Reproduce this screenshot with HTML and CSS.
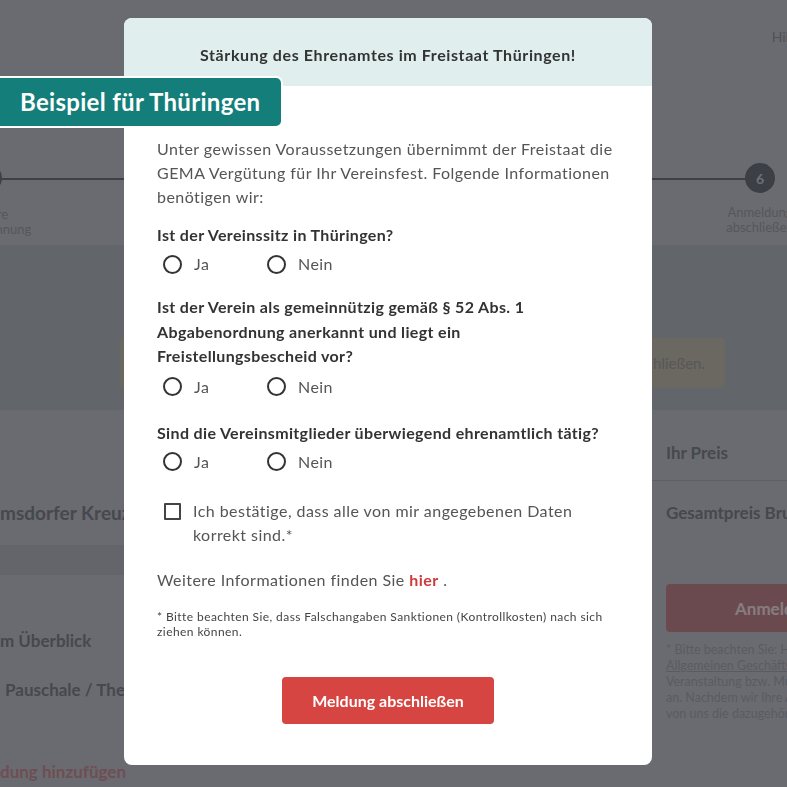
FILE: index.html
```html
<!DOCTYPE html>
<html lang="de">
<head>
    <meta charset="utf-8">
    <title>Meldung abschließen - Stärkung des Ehrenamtes</title>
    <link rel="stylesheet" href="styles.css">
</head>
<body>
    <div class="page">
        <div class="topbar">
            <a class="help">Hilfe</a>
        </div>

        <div class="stepper">
            <div class="step step-first">
                <span class="step-dot"></span>
                <span class="step-label">Ihre<br>Berechnung</span>
            </div>
            <div class="step step-last">
                <span class="step-dot">6</span>
                <span class="step-label">Anmeldung<br>abschließen</span>
            </div>
        </div>

        <div class="band">
            <div class="notice">Bitte prüfen Sie alle Angaben sorgfältig, bevor Sie Ihre Anmeldung abschließen.</div>
        </div>

        <div class="content">
            <div class="main-col">
                <div class="venue">msdorfer Kreuzkirche</div>
                <div class="venue-bar"></div>
                <div class="overview">m Überblick</div>
                <div class="package">Pauschale / The Band</div>
                <div class="add-link">dung hinzufügen</div>
            </div>
            <aside class="side-col">
                <div class="price-row">Ihr Preis</div>
                <div class="price-row total">Gesamtpreis Brutto</div>
                <button class="submit-disabled">Anmeldung abschließen</button>
                <p class="side-note">
                    * Bitte beachten Sie: Hiermit<br>
                    <u>Allgemeinen Geschäftsbedingungen</u><br>
                    Veranstaltung bzw. Musiknutzung<br>
                    an. Nachdem wir Ihre Anmeldung<br>
                    von uns die dazugehörige Rechnung.
                </p>
            </aside>
        </div>
    </div>

    <div class="overlay"></div>

    <div class="badge">Beispiel für Thüringen</div>

    <div class="modal">
        <div class="modal-header">Stärkung des Ehrenamtes im Freistaat Thüringen!</div>
        <form class="modal-body">
            <p class="intro">Unter gewissen Voraussetzungen übernimmt der Freistaat die GEMA Vergütung für Ihr Vereinsfest. Folgende Informationen benötigen wir:</p>

            <div class="question">Ist der Vereinssitz in Thüringen?</div>
            <div class="choices">
                <label class="choice"><input type="radio" name="sitz"><span>Ja</span></label>
                <label class="choice"><input type="radio" name="sitz"><span>Nein</span></label>
            </div>

            <div class="question q-long">Ist der Verein als gemeinnützig gemäß § 52 Abs. 1 Abgabenordnung anerkannt und liegt ein Freistellungsbescheid vor?</div>
            <div class="choices">
                <label class="choice"><input type="radio" name="gemein"><span>Ja</span></label>
                <label class="choice"><input type="radio" name="gemein"><span>Nein</span></label>
            </div>

            <div class="question q-last">Sind die Vereinsmitglieder überwiegend ehrenamtlich tätig?</div>
            <div class="choices">
                <label class="choice"><input type="radio" name="ehren"><span>Ja</span></label>
                <label class="choice"><input type="radio" name="ehren"><span>Nein</span></label>
            </div>

            <label class="confirm">
                <input type="checkbox" name="bestaetigung">
                <span>Ich bestätige, dass alle von mir angegebenen Daten korrekt sind.*</span>
            </label>

            <p class="more-info">Weitere Informationen finden Sie <a href="#">hier</a> .</p>

            <p class="footnote">* Bitte beachten Sie, dass Falschangaben Sanktionen (Kontrollkosten) nach sich ziehen können.</p>

            <div class="actions">
                <button type="submit">Meldung abschließen</button>
            </div>
        </form>
    </div>
</body>
</html>
```

FILE: styles.css
```css
body {
    margin: 0;
    height: 787px;
    overflow: hidden;
    background: #c1c3cc;
    font-family: Lato, "Open Sans", sans-serif;
}

/* page behind the dialog */
.page {
    width: 787px;
}
.topbar {
    height: 150px;
    display: flex;
    justify-content: flex-end;
    padding-top: 28px;
    box-sizing: border-box;
}
.help {
    font-size: 14px;
    color: #91959f;
    margin-right: -14px;
}
.stepper {
    height: 95px;
    display: flex;
    justify-content: space-between;
    position: relative;
}
.stepper::before {
    content: "";
    position: absolute;
    left: 0;
    right: 20px;
    top: 28px;
    height: 2px;
    background: #717483;
}
.step {
    display: flex;
    flex-direction: column;
    align-items: center;
    width: 90px;
    position: relative;
}
.step-first {
    margin-left: -48px;
}
.step-last {
    margin-right: -18px;
}
.step-dot {
    width: 28px;
    height: 28px;
    margin-top: 14px;
    border-radius: 50%;
    border: 2px solid #717483;
    background: #c1c3cc;
    box-sizing: border-box;
    display: flex;
    align-items: center;
    justify-content: center;
    font-size: 14px;
    font-weight: bold;
    color: #c8ccd7;
}
.step-first .step-dot {
    margin-left: -18px;
}
.step-last .step-dot {
    width: 30px;
    height: 30px;
    margin-top: 13px;
    background: #6d737f;
    border-color: #6d737f;
}
.step-label {
    margin-top: 15px;
    font-size: 13px;
    line-height: 15px;
    text-align: center;
    color: #9b9ea9;
}
.step-last .step-label {
    margin-top: 12px;
}
.band {
    height: 165px;
    background: #b2b8c1;
    padding-top: 93px;
    box-sizing: border-box;
}
.notice {
    margin-left: 120px;
    width: 605px;
    height: 50px;
    line-height: 50px;
    padding: 0 20px;
    box-sizing: border-box;
    background: #c1bdaf;
    border-radius: 4px;
    font-size: 15px;
    color: #9f9ea3;
    text-align: right;
    white-space: nowrap;
    overflow: hidden;
}
.content {
    display: grid;
    grid-template-columns: 652px 1fr;
}
.main-col {
    font-weight: bold;
    color: #7f8391;
}
.venue {
    margin-top: 91px;
    font-size: 19px;
    line-height: 24px;
    white-space: nowrap;
}
.venue-bar {
    margin-top: 20px;
    height: 30px;
    background: #b6b9c4;
}
.overview {
    margin-top: 54px;
    font-size: 17px;
    line-height: 24px;
}
.package {
    margin-top: 25px;
    padding-left: 5px;
    font-size: 17px;
    line-height: 24px;
}
.add-link {
    margin-top: 58px;
    font-size: 17px;
    line-height: 24px;
    color: #c88f98;
}
.side-col {
    padding: 15px 0 0 14px;
    white-space: nowrap;
}
.price-row {
    height: 56px;
    line-height: 24px;
    padding-top: 16px;
    box-sizing: border-box;
    border-bottom: 1px solid #acb0bb;
    margin-left: -14px;
    padding-left: 14px;
    font-size: 17px;
    font-weight: bold;
    color: #7f8391;
}
.price-row.total {
    height: 64px;
    padding-top: 20px;
    border-bottom: none;
}
.submit-disabled {
    display: block;
    margin-top: 39px;
    width: 260px;
    height: 48px;
    border: none;
    border-radius: 4px;
    background: #c48791;
    color: #f3e4e8;
    font-family: inherit;
    font-size: 17px;
    font-weight: bold;
    text-align: left;
    padding-left: 69px;
}
.side-note {
    margin: 10px 0 0;
    font-size: 12.5px;
    line-height: 16px;
    color: #a4a7b2;
}

.overlay {
    position: fixed;
    inset: 0;
    background: rgba(0, 0, 0, 0.45);
}

/* label in the corner */
.badge {
    position: fixed;
    left: -10px;
    top: 76px;
    height: 48px;
    line-height: 48px;
    padding: 0 21px 0 28px;
    background: #147e7a;
    border: 2px solid #fff;
    border-radius: 7px;
    color: #fff;
    font-size: 24px;
    font-weight: bold;
    letter-spacing: 0.3px;
    z-index: 3;
}

/* dialog */
.modal {
    position: fixed;
    left: 124px;
    top: 18px;
    width: 528px;
    background: #fff;
    border-radius: 8px;
    overflow: hidden;
    z-index: 2;
}
.modal-header {
    height: 68px;
    line-height: 74px;
    background: #e0eeee;
    text-align: center;
    font-size: 16px;
    font-weight: bold;
    letter-spacing: 0.6px;
    color: #333;
}
.modal-body {
    padding: 51px 33px 41px;
    font-size: 16px;
    line-height: 24px;
    letter-spacing: 0.45px;
    color: #555;
}
.intro {
    margin: 0 0 14px;
}
.question {
    font-weight: bold;
    letter-spacing: 0.35px;
    color: #333;
    margin-bottom: 5px;
}
.q-long {
    line-height: 24.5px;
    margin-bottom: 6px;
}
.q-last {
    padding-top: 3px;
    margin-bottom: 5px;
}
.choices {
    display: flex;
    padding-left: 6px;
    margin-bottom: 19px;
}
.choice {
    display: flex;
    align-items: center;
    gap: 12px;
    width: 104px;
}
.choice input {
    appearance: none;
    margin: 0;
    width: 19px;
    height: 19px;
    border: 2px solid #333;
    border-radius: 50%;
}
.confirm {
    display: flex;
    align-items: flex-start;
    gap: 12px;
    margin-top: 25px;
    padding-left: 7px;
    padding-right: 30px;
}
.confirm input {
    appearance: none;
    flex: none;
    margin: 4px 0 0;
    width: 17px;
    height: 17px;
    border: 2px solid #444;
    border-radius: 1px;
}
.more-info {
    margin: 21px 0 0;
}
.more-info a {
    color: #d0393a;
    font-weight: bold;
    text-decoration: none;
}
.footnote {
    margin: 17px 0 0;
    font-size: 12px;
    line-height: 15px;
    letter-spacing: 0.42px;
    color: #444;
}
.actions {
    display: flex;
    justify-content: center;
    margin-top: 38px;
}
.actions button {
    width: 212px;
    height: 47px;
    border: none;
    border-radius: 4px;
    background: #d64541;
    color: #fff;
    font-family: inherit;
    font-size: 16px;
    font-weight: bold;
    cursor: pointer;
}
```
